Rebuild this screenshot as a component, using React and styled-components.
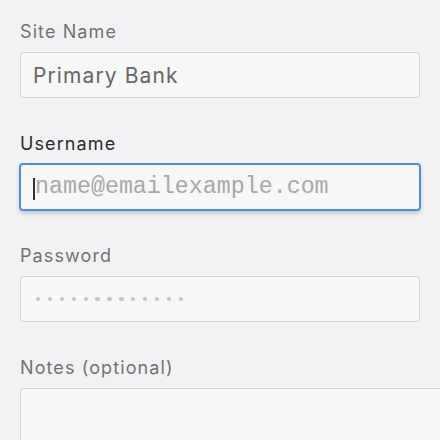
import React from 'react'
import styled, { createGlobalStyle } from 'styled-components'

const GlobalStyle = createGlobalStyle`
    html, body {
        margin: 0;
        padding: 0;
        background: #f2f2f4;
    }
    body {
        font-family: Inter, "Noto Sans", sans-serif;
        width: 440px;
        height: 440px;
        overflow: hidden;
    }
`

const Form = styled.form`
    box-sizing: border-box;
    width: 440px;
    height: 440px;
    padding: 22px 20px 0 20px;
    display: flex;
    flex-direction: column;
    gap: 36px;
    overflow: hidden;
`

const Field = styled.div`
    display: flex;
    flex-direction: column;
    gap: 10px;
`

const Label = styled.label`
    font-size: 18px;
    line-height: 20px;
    height: 20px;
    letter-spacing: 1.1px;
    color: ${p => (p.$active ? '#2b2b2b' : '#727272')};
`

const Box = styled.div`
    position: relative;
    box-sizing: border-box;
    height: ${p => p.$tall ? '80px' : '46px'};
    width: ${p => p.$wide ? '440px' : '400px'};
    background: #f7f7f7;
    border: 1px solid ${p => (p.$focused ? '#4a90e2' : '#d2d2d2')};
    border-radius: 3px;
    box-shadow: ${p => p.$focused
        ? '0 0 0 1px #4a90e2, 0 3px 5px rgba(0,0,0,.22)'
        : 'none'};
    display: flex;
    align-items: center;
    padding: 0 12px;
`

const Value = styled.span`
    font-size: 21px;
    color: #666;
    letter-spacing: 1.1px;
`

const Placeholder = styled.span`
    font-family: "Liberation Mono", "DejaVu Sans Mono", monospace;
    font-size: 23.3px;
    color: #a9a9a9;
    margin-left: 2px;
`

const Caret = styled.span`
    position: absolute;
    left: 12px;
    top: 13px;
    width: 2px;
    height: 22px;
    background: #333;
`

const Dots = styled.span`
    display: flex;
    gap: 7.6px;
    margin-left: 3px;
`

const Dot = styled.span`
    width: 4.3px;
    height: 4.3px;
    border-radius: 50%;
    background: #c6c6c6;
`

const App = () => {
    return <>
        <GlobalStyle />
        <Form>
            <Field>
                <Label>Site Name</Label>
                <Box><Value>Primary Bank</Value></Box>
            </Field>
            <Field>
                <Label $active>Username</Label>
                <Box $focused>
                    <Caret />
                    <Placeholder>name@emailexample.com</Placeholder>
                </Box>
            </Field>
            <Field>
                <Label>Password</Label>
                <Box>
                    <Dots>
                        {Array.from({ length: 13 }).map((_, i) => <Dot key={i} />)}
                    </Dots>
                </Box>
            </Field>
            <Field>
                <Label>Notes (optional)</Label>
                <Box $tall $wide />
            </Field>
        </Form>
    </>
}

export default App
